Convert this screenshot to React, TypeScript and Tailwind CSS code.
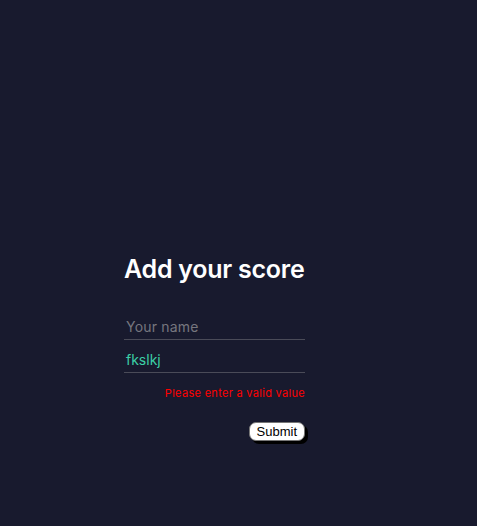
import React from "react";

export default function App() {
  return (
    <div className="w-[477px] h-[526px] bg-[#181a2e] flex" style={{ fontFamily: "Inter, 'Open Sans', sans-serif" }}>
      <div className="ml-[124px] mt-[253px] w-[181px] flex flex-col">
        <h1 className="text-[25px] leading-[32px] font-semibold text-white tracking-[-0.25px] whitespace-nowrap">Add your score</h1>
        <div className="mt-[29px] h-[26px] border-b border-[#4a4b58] flex items-end pb-[3px] pl-[2px]">
          <span className="text-[14px] leading-[18px] text-[#76767e] tracking-[0.2px]">Your name</span>
        </div>
        <div className="mt-[7px] h-[26px] border-b border-[#4a4b58] flex items-end pb-[3px] pl-[2px]">
          <span className="text-[14px] leading-[18px] text-[#3ccfa6]">fkslkj</span>
        </div>
        <div className="mt-[13px] text-right text-[11px] leading-[14px] text-[#ff0000] tracking-[0.3px]">Please enter a valid value</div>
        <div className="mt-[22px] flex justify-end">
          <button
            className="bg-white text-black text-[13px] leading-[15px] px-[7px] py-[1px] rounded-[7px] border border-[#767676] shadow-[3px_3px_0_#000]"
            style={{ fontFamily: "'Liberation Sans', Arial, sans-serif" }}
          >
            Submit
          </button>
        </div>
      </div>
    </div>
  );
}
